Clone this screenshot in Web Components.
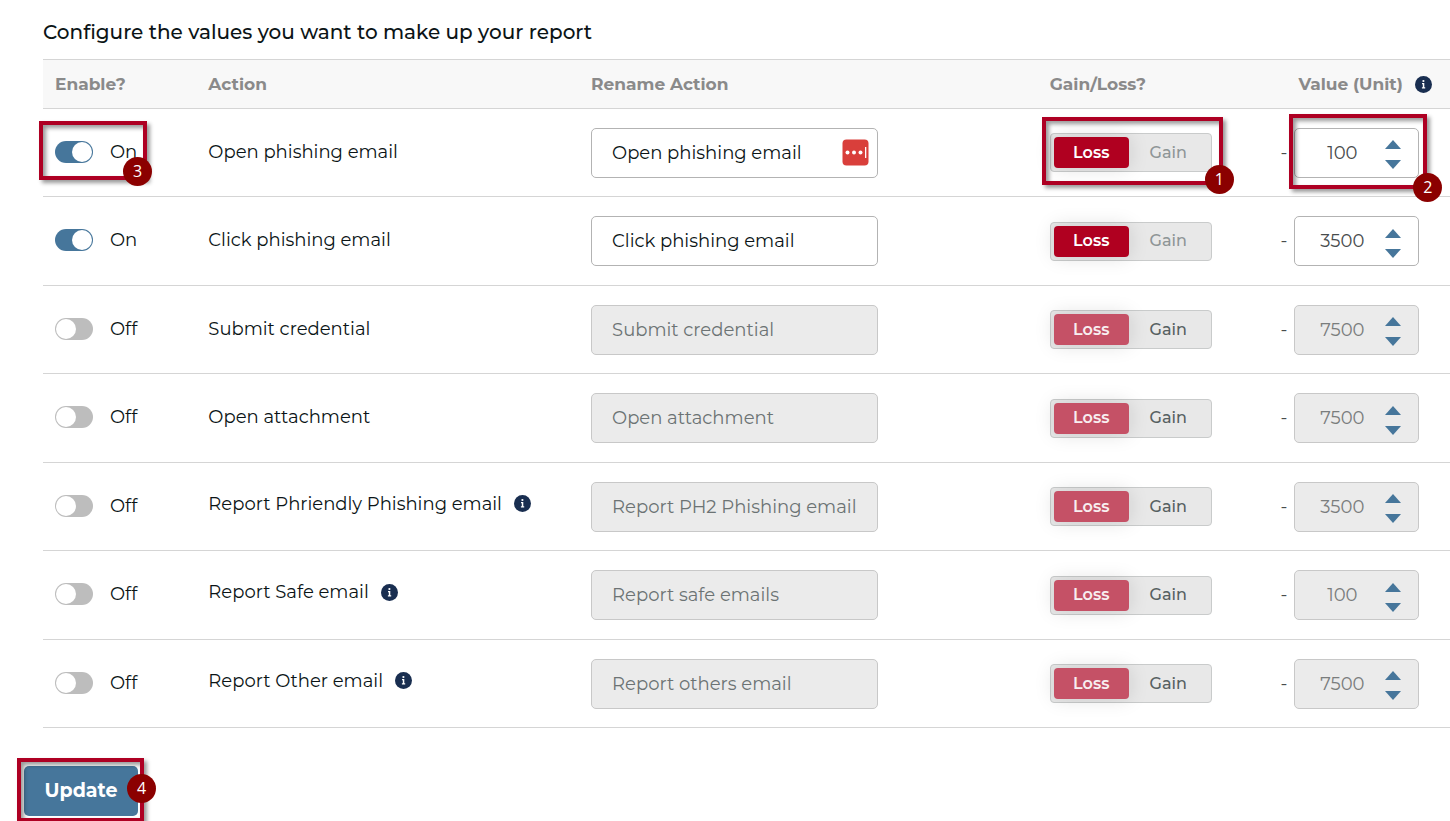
<!DOCTYPE html>
<html lang="en">
<head>
<meta charset="utf-8">
<title>Report values</title>
<style>
	body {
		margin: 0;
		background: #fff;
		color: #0b1416;
		font-family: Montserrat, Inter, sans-serif;
		font-size: 18px;
		line-height: 24px;
	}
</style>
</head>
<body>
<report-settings>
	<span slot="title">Configure the values you want to make up your report</span>
</report-settings>

<script>
function makeTemplate(html) {
	const template = document.createElement('template')
	template.innerHTML = html
	return template
}

class BaseElement extends HTMLElement {
	constructor() {
		super()
		this.attachShadow({ mode: 'open' })
		this.shadowRoot.appendChild(this.constructor.template.content.cloneNode(true))
	}

	$(selector) {
		return this.shadowRoot.querySelector(selector)
	}
}

// On/off switch with its state written next to it
class ToggleSwitch extends BaseElement {
	static template = makeTemplate(`
		<style>
			:host {
				display: block;
				width: 82px;
			}

			label {
				display: flex;
				align-items: center;
				gap: 17px;
				cursor: pointer;
			}

			input {
				appearance: none;
				flex: none;
				display: flex;
				box-sizing: border-box;
				width: 38px;
				height: 22px;
				margin: 0;
				padding: 1px;
				border-radius: 11px;
				background: #bdbdbd;
				cursor: pointer;
			}

			input::before {
				content: '';
				width: 20px;
				height: 20px;
				border-radius: 50%;
				background: #fff;
			}

			input:checked {
				justify-content: flex-end;
				background: #46769b;
			}
		</style>
		<label><input type="checkbox" role="switch"><span></span></label>
	`)

	connectedCallback() {
		this.input = this.$('input')
		this.input.checked = this.hasAttribute('on')
		this.input.addEventListener('change', () => this.update())
		this.update()
	}

	update() {
		this.$('span').textContent = this.input.checked ? 'On' : 'Off'
	}
}

class RenameField extends BaseElement {
	static template = makeTemplate(`
		<style>
			:host {
				display: flex;
				align-items: center;
				box-sizing: border-box;
				width: 287px;
				height: 50px;
				padding: 0 8px 0 20px;
				border: 1px solid #b3b3b3;
				border-radius: 5px;
				background: #fff;
			}

			:host([disabled]) {
				border-color: #c8c8c8;
				background: #ebebeb;
			}

			input {
				flex: 1;
				min-width: 0;
				padding: 0;
				border: 0;
				outline: 0;
				background: none;
				color: inherit;
				font: inherit;
			}

			input:disabled {
				color: #6c7374;
			}

			svg {
				display: none;
			}

			:host([manager]) svg {
				display: block;
			}
		</style>
		<input type="text">
		<svg width="27" height="27" viewBox="0 0 27 27" aria-hidden="true">
			<rect width="26" height="26" x="0.5" y="0.5" rx="4" fill="#d93f3b"/>
			<circle cx="5.5" cy="13.5" r="2" fill="#fff"/>
			<circle cx="12" cy="13.5" r="2" fill="#fff"/>
			<circle cx="18.5" cy="13.5" r="2" fill="#fff"/>
			<rect x="23" y="8" width="1.3" height="11" fill="#fff"/>
		</svg>
	`)

	connectedCallback() {
		const input = this.$('input')
		input.value = this.getAttribute('value')
		input.disabled = this.hasAttribute('disabled')
		input.setAttribute('aria-label', 'Rename ' + this.getAttribute('value'))
	}
}

class GainLoss extends BaseElement {
	static template = makeTemplate(`
		<style>
			:host {
				display: flex;
				box-sizing: border-box;
				width: 162px;
				height: 39px;
				padding: 3px;
				border: 1px solid #c9cbcb;
				border-radius: 4px;
				background: #e8e8e8;
				font-size: 16px;
				font-weight: 500;
			}

			label {
				position: relative;
				display: flex;
				flex: 1;
				align-items: center;
				justify-content: center;
				border-radius: 4px;
				color: #8e9596;
			}

			:host([disabled]) label {
				color: #566061;
			}

			input {
				position: absolute;
				inset: 0;
				margin: 0;
				opacity: 0;
			}

			label:has(:checked) {
				flex: 0 0 75px;
				background: #b00020;
				box-shadow: 0 0 20px rgba(0, 0, 0, 0.13);
				color: #fff;
				font-weight: 600;
			}

			:host([disabled]) label:has(:checked) {
				background: #c55166;
				color: #f8eef0;
			}
		</style>
		<label><input type="radio" name="kind" checked>Loss</label>
		<label><input type="radio" name="kind">Gain</label>
	`)

	connectedCallback() {
		for (const input of this.shadowRoot.querySelectorAll('input')) {
			input.disabled = this.hasAttribute('disabled')
		}
	}
}

class ValueStepper extends BaseElement {
	static template = makeTemplate(`
		<style>
			:host {
				display: flex;
				align-items: center;
				box-sizing: border-box;
				width: 125px;
				height: 50px;
				padding-right: 17px;
				border: 1px solid #b3b3b3;
				border-radius: 5px;
				background: #fff;
				color: #484c4d;
			}

			:host([disabled]) {
				border-color: #c8c8c8;
				background: #ebebeb;
				color: #7a7d7d;
			}

			input {
				appearance: textfield;
				flex: 1;
				min-width: 0;
				padding: 0 0 0 4px;
				border: 0;
				outline: 0;
				background: none;
				color: inherit;
				font: inherit;
				text-align: center;
			}

			input::-webkit-inner-spin-button {
				appearance: none;
				margin: 0;
			}

			div {
				display: flex;
				flex-direction: column;
				gap: 11px;
				padding-top: 4px;
			}

			button {
				display: block;
				padding: 0;
				border: 0;
				background: none;
			}

			svg {
				display: block;
				fill: #46769b;
			}
		</style>
		<input type="number" aria-label="Value">
		<div>
			<button type="button" aria-label="Increase"><svg width="16" height="9"><path d="M8 0l8 9H0z"/></svg></button>
			<button type="button" aria-label="Decrease"><svg width="16" height="9"><path d="M0 0h16L8 9z"/></svg></button>
		</div>
	`)

	connectedCallback() {
		const input = this.$('input')
		const [up, down] = this.shadowRoot.querySelectorAll('button')
		input.value = this.getAttribute('value')
		input.disabled = up.disabled = down.disabled = this.hasAttribute('disabled')
		up.addEventListener('click', () => input.stepUp())
		down.addEventListener('click', () => input.stepDown())
	}
}

class InfoIcon extends BaseElement {
	static template = makeTemplate(`
		<style>
			:host {
				display: block;
				flex: none;
			}

			svg {
				display: block;
			}
		</style>
		<svg width="17" height="17" viewBox="0 0 17 17" role="img" aria-label="More information">
			<circle cx="8.5" cy="8.5" r="8.5" fill="#192e50"/>
			<circle cx="8.4" cy="5" r="1.1" fill="#fff"/>
			<path d="M7 7h2.3v4.2h.9v1.2H6.9v-1.2h.9V8.2H7z" fill="#fff"/>
		</svg>
	`)
}

// Frame with a numbered badge, drawn over whatever it wraps
class StepMark extends BaseElement {
	static template = makeTemplate(`
		<style>
			:host {
				display: block;
				position: relative;
				width: fit-content;
			}

			.frame {
				position: absolute;
				inset: var(--frame);
				border: 4px solid #ae0023;
				box-shadow: 3px 3px 4px rgba(0, 0, 0, 0.4), inset 3px 3px 4px rgba(0, 0, 0, 0.4);
				pointer-events: none;
			}

			.badge {
				position: absolute;
				right: var(--badge-right);
				bottom: var(--badge-bottom);
				width: 29px;
				height: 29px;
				border-radius: 50%;
				background: #8b0000;
				color: #fff;
				font: 16px/29px "Open Sans", sans-serif;
				text-align: center;
			}
		</style>
		<slot></slot>
		<div class="frame"><span class="badge"></span></div>
	`)

	connectedCallback() {
		this.$('.badge').textContent = this.getAttribute('step')
	}
}

const rows = [
	{ action: 'Open phishing email', rename: 'Open phishing email', value: 100, on: true, marked: true },
	{ action: 'Click phishing email', rename: 'Click phishing email', value: 3500, on: true },
	{ action: 'Submit credential', rename: 'Submit credential', value: 7500 },
	{ action: 'Open attachment', rename: 'Open attachment', value: 7500 },
	{ action: 'Report Phriendly Phishing email', rename: 'Report PH2 Phishing email', value: 3500, info: true },
	{ action: 'Report Safe email', rename: 'Report safe emails', value: 100, info: true },
	{ action: 'Report Other email', rename: 'Report others email', value: 7500, info: true }
]

function mark(row, step, html) {
	return row.marked ? `<step-mark class="step-${step}" step="${step}">${html}</step-mark>` : html
}

function renderRow(row) {
	const disabled = row.on ? '' : 'disabled'
	return `
		<tr>
			<td class="text">${mark(row, 3, `<toggle-switch ${row.on ? 'on' : ''}></toggle-switch>`)}</td>
			<td class="text"><div class="action ${row.info ? 'noted' : ''}">${row.action}${row.info ? '<info-icon></info-icon>' : ''}</div></td>
			<td><rename-field value="${row.rename}" ${disabled} ${row.marked ? 'manager' : ''}></rename-field></td>
			<td>${mark(row, 1, `<gain-loss ${disabled}></gain-loss>`)}</td>
			<td><div class="value"><span>-</span>${mark(row, 2, `<value-stepper value="${row.value}" ${disabled}></value-stepper>`)}</div></td>
		</tr>`
}

class ReportSettings extends BaseElement {
	static template = makeTemplate(`
		<style>
			:host {
				display: block;
				padding: 20px 0 5px;
			}

			h1 {
				margin: 0 0 15px 43px;
				font-size: 20px;
				font-weight: 500;
				line-height: 24px;
			}

			.wrap {
				padding-left: 43px;
			}

			table {
				width: 100%;
				min-width: 1300px;
				border-collapse: separate;
				border-spacing: 0;
				table-layout: fixed;
			}

			th, td {
				box-sizing: border-box;
				padding: 0 0 0 12px;
				border-bottom: 1px solid #d5d5d5;
				text-align: left;
				vertical-align: middle;
			}

			th {
				height: 50px;
				border-top: 1px solid #d5d5d5;
				background: #f8f8f8;
				color: #8a8a8a;
				font-size: 17px;
				font-weight: 700;
			}

			td {
				height: 88px;
			}

			tr:nth-child(even) td {
				height: 89px;
			}

			td.text {
				padding-bottom: 2px;
			}

			th:last-child {
				padding-left: 30px;
			}

			.action, .unit {
				display: flex;
				align-items: center;
				gap: 12px;
			}

			.noted {
				padding-bottom: 4px;
			}

			.value {
				display: flex;
				align-items: center;
				gap: 7px;
			}

			.value span {
				color: #484c4d;
			}

			.step-1 {
				--frame: -16px -11px -13px -8px;
				--badge-right: -15px;
				--badge-bottom: -13px;
			}

			.step-2 {
				--frame: -14px -8px -11px -5px;
				--badge-right: -19px;
				--badge-bottom: -17px;
			}

			.step-3 {
				--frame: -19px -10px -16px -16px;
				--badge-right: -9px;
				--badge-bottom: -10px;
			}

			.step-4 {
				--frame: -8px -6px -6px -7px;
				--badge-right: -16px;
				--badge-bottom: 15px;
				margin: 38px 0 0 24px;
			}

			.update {
				display: block;
				height: 50px;
				min-width: 114px;
				padding: 0 20px;
				border: 0;
				border-radius: 5px;
				background: #46769b;
				color: #fff;
				font: inherit;
				font-size: 19px;
				font-weight: 700;
			}
		</style>
		<h1><slot name="title"></slot></h1>
		<div class="wrap">
			<table>
				<colgroup>
					<col style="width: 10.9%">
					<col style="width: 27.2%">
					<col style="width: 32.6%">
					<col style="width: 16.4%">
					<col>
				</colgroup>
				<thead>
					<tr>
						<th>Enable?</th>
						<th>Action</th>
						<th>Rename Action</th>
						<th>Gain/Loss?</th>
						<th><div class="unit">Value (Unit)<info-icon></info-icon></div></th>
					</tr>
				</thead>
				<tbody>${rows.map(renderRow).join('')}</tbody>
			</table>
		</div>
		<step-mark class="step-4" step="4"><button class="update" type="button">Update</button></step-mark>
	`)
}

customElements.define('toggle-switch', ToggleSwitch)
customElements.define('rename-field', RenameField)
customElements.define('gain-loss', GainLoss)
customElements.define('value-stepper', ValueStepper)
customElements.define('info-icon', InfoIcon)
customElements.define('step-mark', StepMark)
customElements.define('report-settings', ReportSettings)
</script>
</body>
</html>
